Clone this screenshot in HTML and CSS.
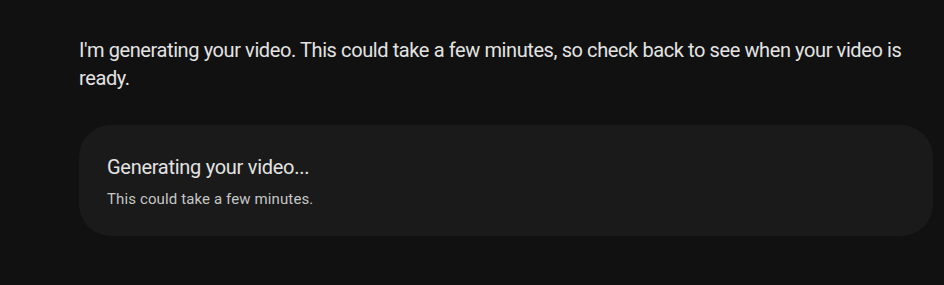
FILE: index.html
```html
<!DOCTYPE html>
<html lang="en">
<head>
<meta charset="utf-8">
<link rel="stylesheet" href="styles.css">
</head>
<body>
<main class="chat">
  <p class="message">I'm generating your video. This could take a few minutes, so check back to see when your video is ready.</p>
  <section class="card">
    <h2 class="card-title">Generating your video...</h2>
    <p class="card-sub">This could take a few minutes.</p>
  </section>
</main>
</body>
</html>
```
FILE: styles.css
```css
html, body {
  margin: 0;
  padding: 0;
  background: #111111;
}
.chat {
  padding: 36px 11px 0 79px;
  font-family: Roboto, "Liberation Sans", sans-serif;
  color: #e3e3e3;
}
.message {
  margin: 0;
  font-size: 20px;
  line-height: 28px;
  letter-spacing: -0.4px;
}
.card {
  margin-top: 33px;
  height: 111px;
  box-sizing: border-box;
  background: #1a1a1a;
  border-radius: 32px;
  padding: 28px 28px 0 28px;
}
.card-title {
  margin: 0;
  font-size: 20px;
  font-weight: 400;
  line-height: 28px;
  letter-spacing: -0.28px;
  color: #e3e3e3;
}
.card-sub {
  margin: 8px 0 0;
  font-size: 15px;
  line-height: 20px;
  letter-spacing: 0.12px;
  color: #c4c7c5;
}
```
